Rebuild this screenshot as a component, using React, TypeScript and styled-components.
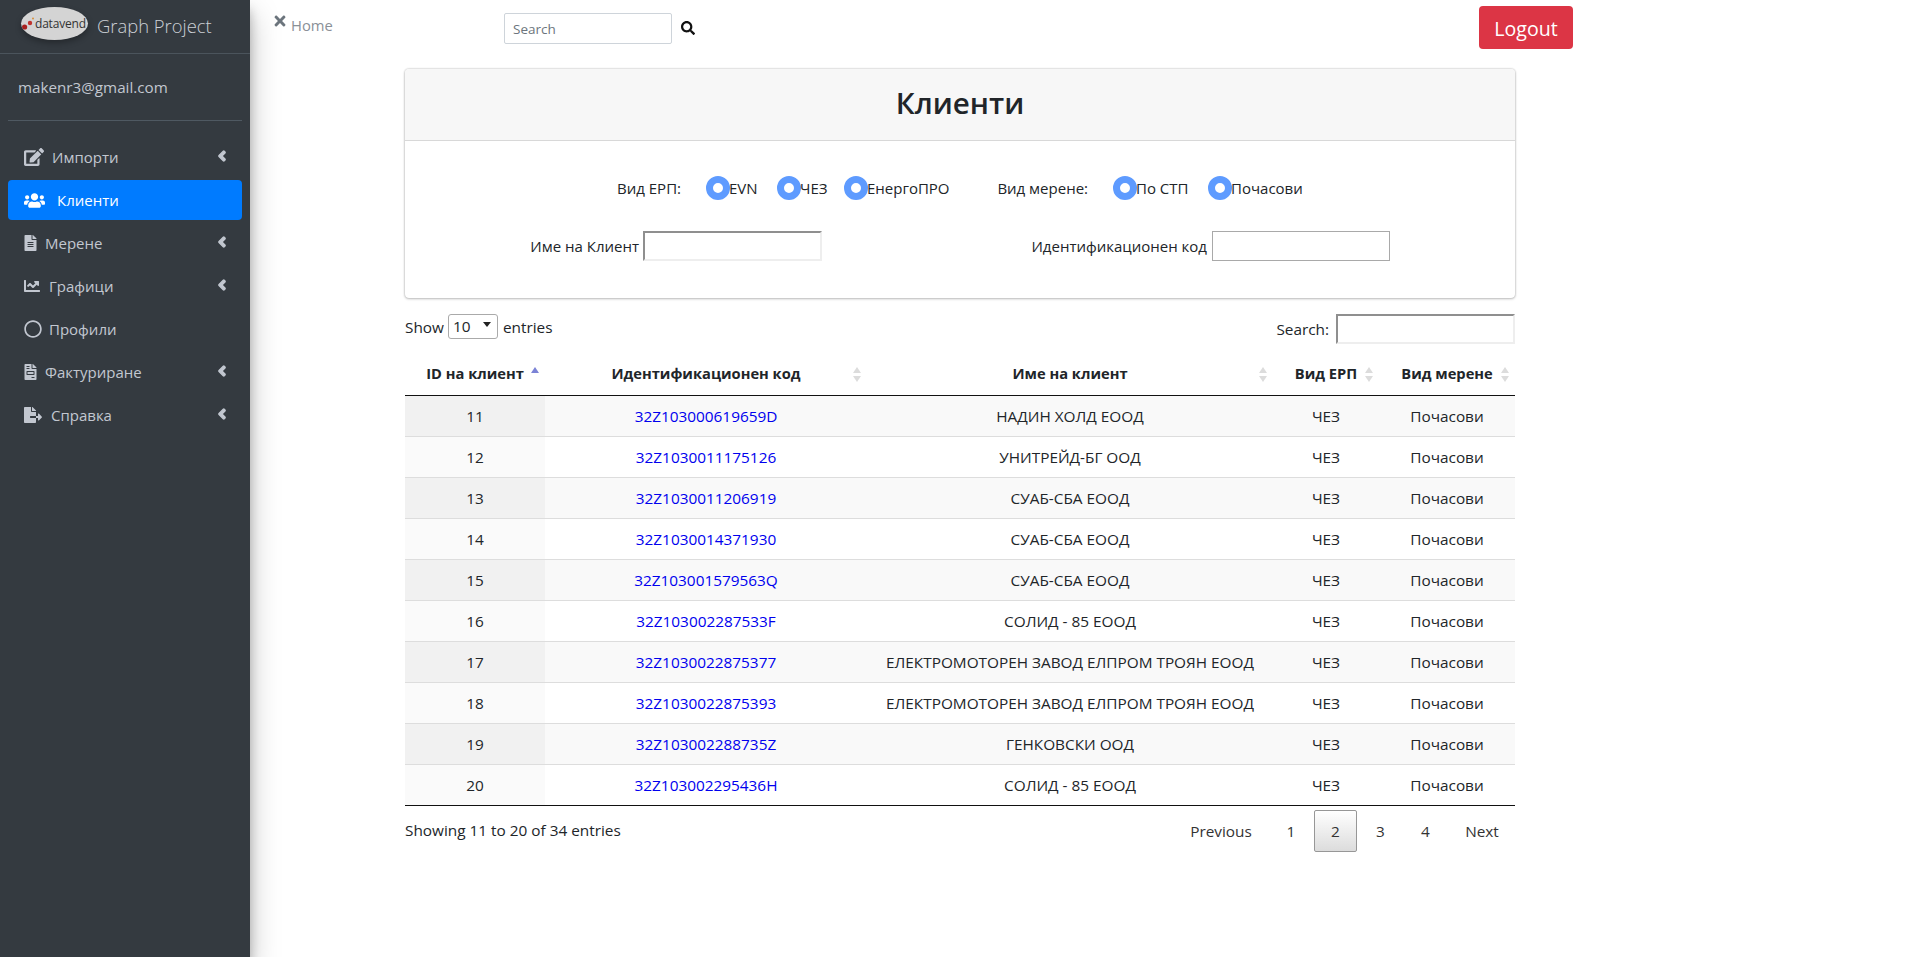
import React from "react";
import styled, { createGlobalStyle } from "styled-components";
import { FaEdit, FaUsers, FaFileAlt, FaChartLine, FaRegCircle, FaFileInvoice, FaFileExport, FaAngleLeft, FaSearch, FaTimes } from "react-icons/fa";

const Global = createGlobalStyle`
  html, body { margin: 0; padding: 0; height: 100%; background: #fff; }
  body { font-family: "Open Sans", "Noto Sans", sans-serif; font-size: 15.35px; color: #212529; }
  #root { height: 100%; }
  * { box-sizing: border-box; }
`;

const Page = styled.div`display: flex; height: 957px; overflow: hidden;`;
const Sidebar = styled.aside`
  width: 250px; flex: none; background: #343a40; color: #c2c7d0;
  box-shadow: 0 14px 28px rgba(0,0,0,.25), 0 10px 10px rgba(0,0,0,.22);
  position: relative; z-index: 2;
`;
const Brand = styled.div`
  height: 54px; display: flex; align-items: flex-start; padding: 7px 0 0 21px;
  border-bottom: 1px solid #4b545c;
`;
const Logo = styled.div`
  width: 67px; height: 33px; border-radius: 50%; background: #d4d4d4; overflow: hidden; flex: none;
  display: flex; align-items: center; gap: 1px; padding-left: 1px; color: #333; font-size: 12px; letter-spacing: -.2px;
  box-shadow: 0 3px 6px rgba(0,0,0,.3); white-space: nowrap;
  svg { flex: none; }
`;
const BrandName = styled.span`font-size: 18.4px; font-weight: 300; margin: 5px 0 0 9px; color: #ccd0d6; line-height: 27px; white-space: nowrap;`;
const UserRow = styled.div`
  margin: 0 8px; height: 67px; padding: 19px 10px 0; border-bottom: 1px solid #4f5962; font-size: 15.2px; line-height: 28px;
`;
const Nav = styled.nav`display: flex; flex-direction: column; padding-top: 16px; gap: 3px;`;
const NavItem = styled.div<{ $active?: boolean }>`
  height: 40px; margin: 0 8px; padding: 0 16px; display: flex; align-items: center; position: relative;
  border-radius: 4px; font-size: 15px;
  background: ${p => (p.$active ? "#007bff" : "transparent")};
  color: ${p => (p.$active ? "#fff" : "#c2c7d0")};
`;
const NavLabel = styled.span<{ $gap: number }>`margin-left: ${p => p.$gap}px; line-height: 20px;`;
const Chevron = styled(FaAngleLeft)`position: absolute; right: 12px; top: 11px; font-size: 16px; stroke-width: 40; stroke: currentColor;`;

const Main = styled.main`flex: 1; min-width: 0; display: flex; flex-direction: column;`;
const TopBar = styled.header`height: 69px; display: flex; align-items: flex-start; position: relative;`;
const Crumb = styled.div`
  width: 254px; flex: none; padding: 15px 0 0 22px; display: flex; align-items: flex-start; color: #8a9097; font-size: 14.8px; line-height: 20px;
  svg { color: #6c757d; font-size: 16px; margin: -2px 3px 0 0; }
`;
const TopSearch = styled.input`
  width: 168px; height: 31px; margin-top: 13px; border: 1px solid #ced4da; border-radius: 2px; padding: 0 8px; font: inherit; font-size: 13.5px; outline: none;
  &::placeholder { color: #6c757d; }
`;
const SearchBtn = styled.div`margin: 21px 0 0 9px; font-size: 14px; color: #111; line-height: 14px;`;
const Logout = styled.button`
  margin: 6px 335px 0 auto; width: 94px; height: 43px; border: 0; border-radius: 4px; padding: 2px 0 0;
  background: #dc3545; color: #fff; font: inherit; font-size: 19.6px;
`;
const Content = styled.div`margin-left: 155px; width: 1110px;`;
const Card = styled.section`
  height: 229px; border-radius: 4px; box-shadow: 0 0 2px rgba(0,0,0,.3), 0 1px 3px rgba(0,0,0,.2);
`;
const CardHead = styled.div`
  height: 72px; background: #f7f7f7; border-bottom: 1px solid #d8d8d8; border-radius: 4px 4px 0 0; display: flex; align-items: center; justify-content: center; padding-bottom: 4px;
`;
const Title = styled.h3`margin: 0; font-size: 29.6px; font-weight: 600; color: #212529;`;
const FormRow = styled.div`display: flex; align-items: center; height: 30px;`;
const FormBody = styled.div`padding: 32px 0 0; display: flex; flex-direction: column; gap: 28px;`;
const Label = styled.label<{ $w: number; $lead: number }>`
  width: ${p => p.$w}px; padding-right: ${p => p.$lead}px; flex: none; text-align: right; white-space: nowrap; font-size: 15px;
`;
const Radio = styled.input.attrs({ type: "radio" })`
  appearance: none; width: 24px; height: 24px; margin: 0; flex: none; border-radius: 50%; background: #fff; border: 7px solid #5e9bff;
`;
const RadioText = styled.span<{ $w: number }>`width: ${p => p.$w}px; flex: none; white-space: nowrap; font-size: 15px; margin: -1px 0 0; text-indent: -1px;`;
const TextField = styled.input<{ $inset?: boolean }>`
  width: ${p => (p.$inset ? 179 : 178)}px; height: 30px; flex: none; background: #fff; outline: none; border-style: solid;
  border-width: ${p => (p.$inset ? 2 : 1)}px;
  border-color: ${p => (p.$inset ? "#8f8f8f #eee #eee #8f8f8f" : "#a9a9a9")};
`;
const Tools = styled.div`display: flex; justify-content: space-between; height: 56px; padding-top: 16px;`;
const ShowBox = styled.div`display: flex; align-items: flex-start; line-height: 26px;`;
const FakeSelect = styled.div`
  width: 50px; height: 25px; margin: 0 5px 0 4px; border: 1px solid #aaa; border-radius: 3px; padding-left: 4px; display: flex; justify-content: space-between; line-height: 23px;
  &::after { content: ""; width: 0; height: 0; margin: 7px 6px 0 0; border: 4px solid transparent; border-top: 5px solid #222; border-bottom: 0; }
`;
const SearchBox = styled.div`display: flex; align-items: flex-start; line-height: 31px;`;
const SearchField = styled.input`width: 179px; height: 30px; margin-left: 7px; border-style: solid; border-width: 2px; border-color: #8f8f8f #eee #eee #8f8f8f; outline: none; background: #fff;`;
const Table = styled.table`width: 1110px; table-layout: fixed; border-collapse: separate; border-spacing: 0;`;
const Th = styled.th`
  height: 42px; border-bottom: 1px solid #111; font-weight: 700; text-align: center; position: relative; padding: 0 0 3px; font-size: 14.7px;
`;
const SortMark = styled.svg`position: absolute; right: 6px; top: 13px;`;
const Row = styled.tr<{ $odd: boolean }>`
  background: ${p => (p.$odd ? "#f9f9f9" : "#fff")};
  td:first-child { background: ${p => (p.$odd ? "#f1f1f1" : "#fafafa")}; }
`;
const Td = styled.td`height: 41px; text-align: center; padding: 0; border-top: 1px solid #ddd; white-space: nowrap;`;
const CodeLink = styled.a`color: #0000ee; text-decoration: none;`;
const TBody = styled.tbody`
  tr:first-child td { border-top: 0; height: 40px; }
  tr:last-child td { border-bottom: 1px solid #111; height: 42px; padding-bottom: 1px; }
`;
const Footer = styled.div`display: flex; justify-content: space-between; align-items: flex-start; padding-top: 4px;`;
const Info = styled.div`padding-top: 10px; line-height: 20px;`;
const Pager = styled.div`display: flex; align-items: flex-start;`;
const PageBtn = styled.div<{ $current?: boolean; $w: number }>`
  width: ${p => p.$w}px; height: 42px; display: flex; align-items: center; justify-content: center; border-radius: 2px; color: #333; margin-left: 2px;
  border: 1px solid ${p => (p.$current ? "#979797" : "transparent")};
  background: ${p => (p.$current ? "linear-gradient(#fff, #dcdcdc)" : "transparent")};
`;

const rows: [number, string, string][] = [
  [11, "32Z103000619659D", "НАДИН ХОЛД ЕООД"],
  [12, "32Z1030011175126", "УНИТРЕЙД-БГ ООД"],
  [13, "32Z1030011206919", "СУАБ-СБА ЕООД"],
  [14, "32Z1030014371930", "СУАБ-СБА ЕООД"],
  [15, "32Z103001579563Q", "СУАБ-СБА ЕООД"],
  [16, "32Z103002287533F", "СОЛИД - 85 ЕООД"],
  [17, "32Z1030022875377", "ЕЛЕКТРОМОТОРЕН ЗАВОД ЕЛПРОМ ТРОЯН ЕООД"],
  [18, "32Z1030022875393", "ЕЛЕКТРОМОТОРЕН ЗАВОД ЕЛПРОМ ТРОЯН ЕООД"],
  [19, "32Z103002288735Z", "ГЕНКОВСКИ ООД"],
  [20, "32Z103002295436H", "СОЛИД - 85 ЕООД"],
];

const Sort = ({ asc }: { asc?: boolean }) => (
  <SortMark width="8" height="16" viewBox="0 0 8 16">
    <path d="M4 0 L8 6 L0 6 Z" fill={asc ? "#7b83d6" : "#dcdcdc"} />
    {!asc && <path d="M4 15 L8 9 L0 9 Z" fill="#dcdcdc" />}
  </SortMark>
);

const nav = [
  { icon: <FaEdit size={20} />, label: "Импорти", gap: 8, arrow: true },
  { icon: <FaUsers size={21} />, label: "Клиенти", gap: 12, active: true },
  { icon: <FaFileAlt size={16} style={{ width: 13 }} />, label: "Мерене", gap: 8, arrow: true },
  { icon: <FaChartLine size={16} />, label: "Графици", gap: 9, arrow: true },
  { icon: <FaRegCircle size={18} />, label: "Профили", gap: 7, arrow: false },
  { icon: <FaFileInvoice size={16} style={{ width: 13 }} />, label: "Фактуриране", gap: 8, arrow: true },
  { icon: <FaFileExport size={18} />, label: "Справка", gap: 9, arrow: true },
];

export default function App() {
  return (
    <Page>
      <Global />
      <Sidebar>
        <Brand>
          <Logo>
            <svg width="12" height="16" viewBox="0 0 12 16">
              <circle cx="2.6" cy="11" r="2.6" fill="#a8201f" />
              <circle cx="8" cy="7" r="2.2" fill="#c0332e" />
              <circle cx="11" cy="2.5" r="1" fill="#d9903a" />
            </svg>
            datavend
          </Logo>
          <BrandName>Graph Project</BrandName>
        </Brand>
        <UserRow>makenr3@gmail.com</UserRow>
        <Nav>
          {nav.map(n => (
            <NavItem key={n.label} $active={n.active}>
              {n.icon}
              <NavLabel $gap={n.gap}>{n.label}</NavLabel>
              {n.arrow && <Chevron />}
            </NavItem>
          ))}
        </Nav>
      </Sidebar>
      <Main>
        <TopBar>
          <Crumb><FaTimes />Home</Crumb>
          <TopSearch placeholder="Search" />
          <SearchBtn><FaSearch /></SearchBtn>
          <Logout>Logout</Logout>
        </TopBar>
        <Content>
          <Card>
            <CardHead><Title>Клиенти</Title></CardHead>
            <FormBody>
              <FormRow>
                <Label $w={301} $lead={25}>Вид ЕРП:</Label>
                <Radio defaultChecked name="erp" />
                <RadioText $w={47}>EVN</RadioText>
                <Radio defaultChecked name="erp2" />
                <RadioText $w={43}>ЧЕЗ</RadioText>
                <Radio defaultChecked name="erp3" />
                <RadioText $w={49}>ЕнергоПРО</RadioText>
                <Label $w={196} $lead={25}>Вид мерене:</Label>
                <Radio defaultChecked name="m1" />
                <RadioText $w={71}>По СТП</RadioText>
                <Radio defaultChecked name="m2" />
                <RadioText $w={71}>Почасови</RadioText>
              </FormRow>
              <FormRow>
                <Label $w={238} $lead={4}>Име на Клиент</Label>
                <TextField $inset />
                <Label $w={390} $lead={5}>Идентификационен код</Label>
                <TextField />
              </FormRow>
            </FormBody>
          </Card>
          <Tools>
            <ShowBox>Show<FakeSelect>10</FakeSelect>entries</ShowBox>
            <SearchBox>Search:<SearchField /></SearchBox>
          </Tools>
          <Table>
            <colgroup>
              <col style={{ width: 140 }} /><col style={{ width: 322 }} /><col style={{ width: 406 }} /><col style={{ width: 106 }} /><col style={{ width: 136 }} />
            </colgroup>
            <thead>
              <tr>
                <Th>ID на клиент<Sort asc /></Th>
                <Th>Идентификационен код<Sort /></Th>
                <Th>Име на клиент<Sort /></Th>
                <Th>Вид ЕРП<Sort /></Th>
                <Th>Вид мерене<Sort /></Th>
              </tr>
            </thead>
            <TBody>
              {rows.map((r, i) => (
                <Row key={r[0]} $odd={i % 2 === 0}>
                  <Td>{r[0]}</Td>
                  <Td><CodeLink href="#">{r[1]}</CodeLink></Td>
                  <Td>{r[2]}</Td>
                  <Td>ЧЕЗ</Td>
                  <Td>Почасови</Td>
                </Row>
              ))}
            </TBody>
          </Table>
          <Footer>
            <Info>Showing 11 to 20 of 34 entries</Info>
            <Pager>
              <PageBtn $w={94}>Previous</PageBtn>
              <PageBtn $w={42}>1</PageBtn>
              <PageBtn $w={43} $current>2</PageBtn>
              <PageBtn $w={43}>3</PageBtn>
              <PageBtn $w={43}>4</PageBtn>
              <PageBtn $w={66}>Next</PageBtn>
            </Pager>
          </Footer>
        </Content>
      </Main>
    </Page>
  );
}
